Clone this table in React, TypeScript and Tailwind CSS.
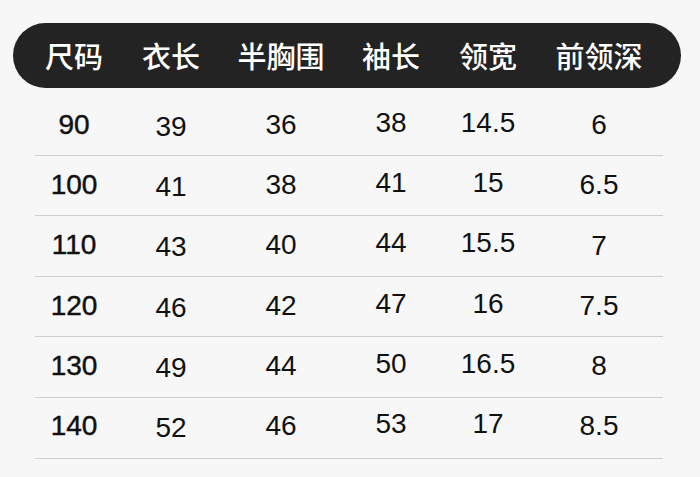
import React from "react";

const headers = ["尺码", "衣长", "半胸围", "袖长", "领宽", "前领深"];
const rows = [
  ["90", "39", "36", "38", "14.5", "6"],
  ["100", "41", "38", "41", "15", "6.5"],
  ["110", "43", "40", "44", "15.5", "7"],
  ["120", "46", "42", "47", "16", "7.5"],
  ["130", "49", "44", "50", "16.5", "8"],
  ["140", "52", "46", "53", "17", "8.5"],
];

const cellNudge = [
  "[-webkit-text-stroke:0.45px_#111]",
  "pt-[4px]",
  "",
  "pb-[4px]",
  "pb-[4px]",
  "pt-[1px]",
];

const rowNudge = ["pb-0", "pb-[1px]", "pb-[1px]", "pb-[2px]", "pb-[3px]", "pb-[4px]"];

export default function App() {
  return (
    <div className="w-[700px] h-[477px] bg-[#f7f7f7] pt-[23px] overflow-hidden">
      <div className="ml-[13px] w-[668px] h-[65px] rounded-full bg-[#232323] grid grid-cols-[122px_72px_148px_72px_122px_100px] items-center">
        {headers.map((h) => (
          <div
            key={h}
            className="flex justify-center text-white text-[29px] font-medium leading-none"
            style={{ fontFamily: '"Noto Sans CJK SC", "Noto Sans", sans-serif' }}
          >
            {h}
          </div>
        ))}
      </div>
      <div className="mt-[7px] flex flex-col">
        {rows.map((r, i) => (
          <div key={i} className="flex flex-col">
            <div className={`ml-[13px] w-[668px] h-[59.6px] grid grid-cols-[122px_72px_148px_72px_122px_100px] ${rowNudge[i]}`}>
              {r.map((v, j) => (
                <div
                  key={j}
                  className={`flex items-center justify-center text-[28px] leading-none text-[#111] ${cellNudge[j]}`}
                  style={{ fontFamily: '"Liberation Sans", Arial, sans-serif' }}
                >
                  {v}
                </div>
              ))}
            </div>
            <div className="ml-[35px] w-[628px] h-px bg-[#cfcfcf]" />
          </div>
        ))}
      </div>
    </div>
  );
}
